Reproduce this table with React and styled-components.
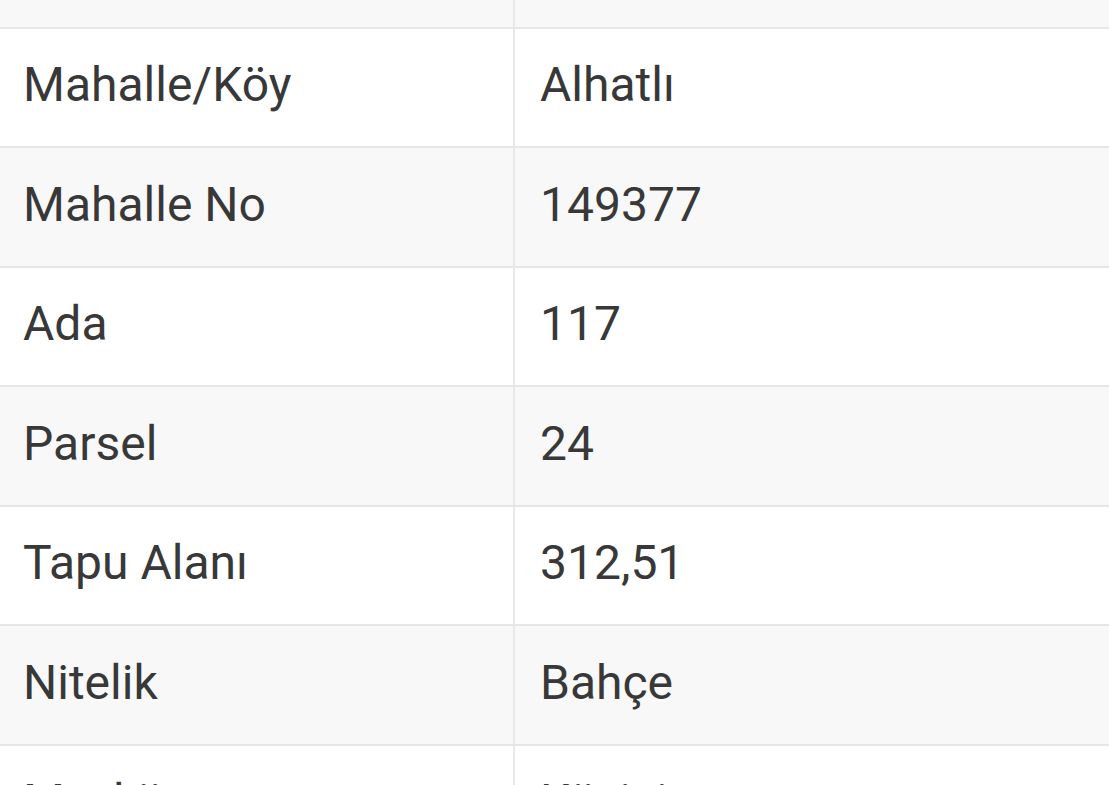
import React from "react";
import styled, { createGlobalStyle } from "styled-components";

const Global = createGlobalStyle`
  html, body { margin: 0; padding: 0; background: #ffffff; overflow: hidden; }
  body { font-family: Roboto, "Noto Sans", "Liberation Sans", sans-serif; }
`;

const Viewport = styled.div`
  width: 1109px;
  height: 785px;
  overflow: hidden;
  background: #ffffff;
`;

const Table = styled.div`
  margin-top: -91px;
  display: flex;
  flex-direction: column;
`;

const Row = styled.div`
  display: grid;
  grid-template-columns: 515px 1fr;
  height: 119.5px;
  box-sizing: border-box;
  border-bottom: 2px solid #e6e6e6;
  background: ${(p) => (p.$shade ? "#f8f8f8" : "#ffffff")};
`;

const Label = styled.div`
  display: flex;
  align-items: center;
  padding: 0 0 5px 23px;
  border-right: 2px solid #e8e8e8;
  font-size: 48px;
  color: #383838;
  white-space: nowrap;
`;

const Value = styled.div`
  display: flex;
  align-items: center;
  padding: 0 0 5px 25px;
  font-size: 48px;
  color: #383838;
  white-space: nowrap;
`;

const rows = [
  ["İlçe", "Merkez"],
  ["Mahalle/Köy", "Alhatlı"],
  ["Mahalle No", "149377"],
  ["Ada", "117"],
  ["Parsel", "24"],
  ["Tapu Alanı", "312,51"],
  ["Nitelik", "Bahçe"],
  ["Mevkii", "Köyiçi"],
];

export default function App() {
  return (
    <Viewport>
      <Global />
      <Table>
        {rows.map(([k, v], i) => (
          <Row key={k} $shade={i % 2 === 0}>
            <Label>{k}</Label>
            <Value>{v}</Value>
          </Row>
        ))}
      </Table>
    </Viewport>
  );
}
